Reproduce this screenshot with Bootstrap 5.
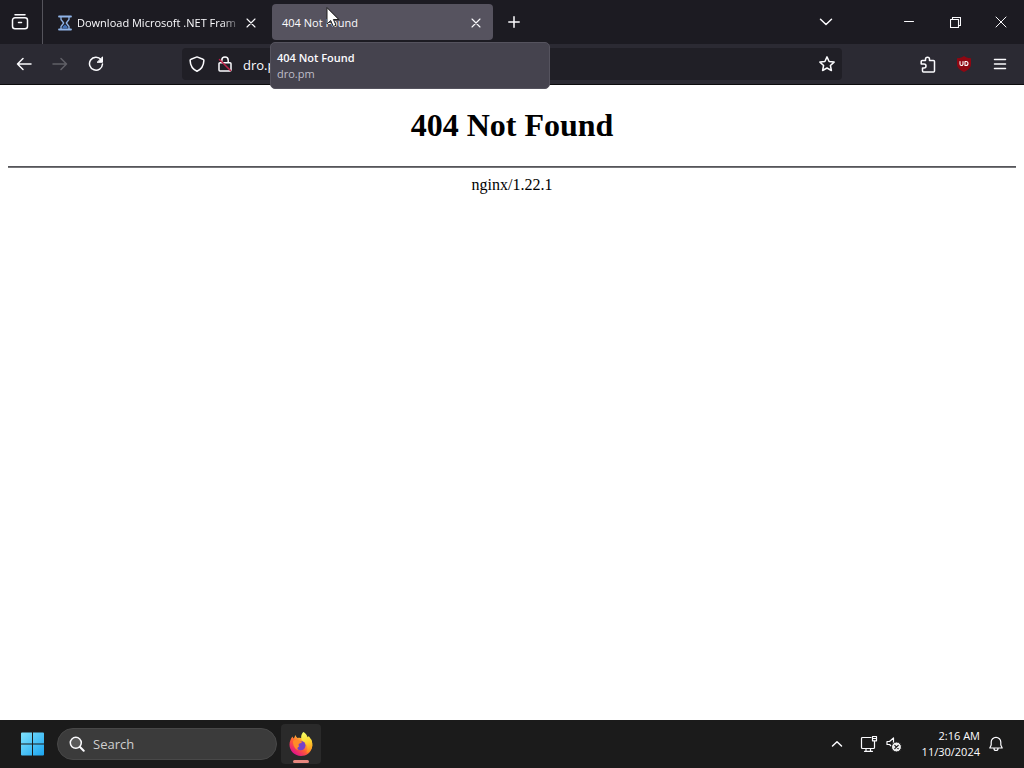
<!DOCTYPE html>
<html lang="en">
<head>
<meta charset="utf-8">
<meta name="viewport" content="width=device-width, initial-scale=1">
<title>404 Not Found</title>
<link href="https://cdn.jsdelivr.net/npm/bootstrap@5.3.0/dist/css/bootstrap.min.css" rel="stylesheet">
<style>
  body { font-family: "Open Sans", "Noto Sans", sans-serif; font-size: 11px; line-height: 16px; background: #fff; color: #fbfbfe; }
  svg { display: block; flex: none; fill: none; stroke: currentColor; stroke-width: 1.5; stroke-linecap: round; stroke-linejoin: round; }
  .plain { background: none; border: 0; padding: 0; color: inherit; display: flex; align-items: center; justify-content: center; flex: none; }
  .tabstrip { background: #1c1b22; height: 44px; }
  .view-cell { width: 43px; border-right: 1px solid #55545c; padding-right: 2px; }
  .browser-tab { width: 221px; height: 36px; border-radius: 4px; padding: 1px 8px 0 10px; }
  .browser-tab.current { background: #56535f; }
  .tab-label { background: none; border: 0; padding: 0; color: inherit; text-align: left; white-space: nowrap; }
  .fade-end { -webkit-mask-image: linear-gradient(to left, transparent, #000 20px); mask-image: linear-gradient(to left, transparent, #000 20px); }
  .tab-close { width: 18px; height: 20px; }
  .new-tab { width: 36px; height: 36px; margin-left: 3px; }
  .win-btns { padding-left: 42px; }
  .win-btn { width: 46px; height: 44px; }
  .tab-tip { position: absolute; top: 38px; left: -2px; width: 280px; z-index: 5; background: #45434e; border: 1px solid #55535e; border-radius: 5px; padding: 7px 6px 6px; }
  .tab-tip strong { font-weight: 600; }
  .tab-tip span { color: #bfbec8; }
  .pointer { position: absolute; left: 54px; top: 3px; z-index: 6; }
  .toolbar-row { background: #2b2a33; height: 41px; border-bottom: 1px solid #0c0c0d; padding: 0 6px; }
  .tool-btn { width: 36px; height: 36px; }
  .address { background: #201f26; height: 32px; border-radius: 4px; margin: 0 68px; padding: 0 7px; }
  .address input { background: none; border: 0; outline: 0; color: inherit; font-size: 13px; padding: 2px 0 0; margin-left: 6px; min-width: 0; }
  .web-page { color: #000; font-family: "Liberation Serif", serif; font-size: 16px; line-height: 18px; padding: 22px 8px; }
  .web-page h1 { font-size: 32px; line-height: 37px; font-weight: 700; margin: 0 0 22px; }
  .web-page hr { margin: 0 0 8px; border: 1px solid; border-color: #55555a #77777a #77777a #55555a; border-width: 1px 0; opacity: 1; }
  .taskbar { background: #1b1b1b; height: 48px; padding: 0 20px; }
  .search-box { background: #3b3b3b; border: 1px solid #484848; border-radius: 16px; height: 32px; width: 220px; padding: 0 11px; margin: 0 4px 0 12px; }
  .search-box input { background: none; border: 0; outline: 0; padding: 0; font-size: 13px; min-width: 0; color: #fff; }
  .search-box input::placeholder { color: #cfcfcf; opacity: 1; }
  .app-btn { width: 40px; height: 40px; background: #2a2a2a; border-radius: 4px; position: relative; }
  .app-btn::after { content: ""; position: absolute; bottom: 1px; left: 12px; width: 16px; height: 3px; border-radius: 2px; background: #e8877f; }
</style>
</head>
<body class="d-flex flex-column min-vh-100">

<header>
  <div class="tabstrip d-flex align-items-center">
    <div class="view-cell align-self-stretch d-flex align-items-center justify-content-center">
      <button class="plain" type="button" aria-label="Recent browsing">
        <svg width="18" height="18" viewBox="0 0 18 18"><path d="M4 1.800h10M4 4.800h10a2.500 2.500 0 0 1 2.500 2.500v6a2.500 2.500 0 0 1-2.500 2.500H4a2.500 2.500 0 0 1-2.500-2.500v-6A2.500 2.500 0 0 1 4 4.800zM7.500 9.500h3"/></svg>
      </button>
    </div>
    <nav class="d-flex align-items-center ms-1 gap-1" aria-label="Tabs">
      <div class="browser-tab d-flex align-items-center">
        <svg class="me-1" width="16" height="16" viewBox="0 0 16 16"><g stroke="#8fb4e8"><path stroke-width="1.800" d="M2 1.500h12M2 14.500h12"/><path stroke-width="1.300" d="M4 2v2.500L6.700 8 4 11.500V14M12 2v2.500L9.300 8 12 11.500V14"/></g><path fill="#3f6fb5" stroke="none" d="M5.500 13.500v-1.700L8 9.500l2.500 2.300v1.700z"/></svg>
        <button class="tab-label fade-end flex-fill" type="button">Download Microsoft .NET Fram</button>
        <button class="plain tab-close" type="button" aria-label="Close tab"><svg width="10" height="10" viewBox="0 0 10 10"><path stroke-width="1.100" d="M1 1l8 8M9 1L1 9"/></svg></button>
      </div>
      <div class="browser-tab current d-flex align-items-center position-relative">
        <button class="tab-label flex-fill" type="button" aria-describedby="tip">404 Not Found</button>
        <button class="plain tab-close" type="button" aria-label="Close tab"><svg width="10" height="10" viewBox="0 0 10 10"><path stroke-width="1.100" d="M1 1l8 8M9 1L1 9"/></svg></button>
        <div class="tab-tip d-flex flex-column" id="tip" role="tooltip"><strong>404 Not Found</strong><span>dro.pm</span></div>
        <svg class="pointer" width="14" height="22" viewBox="0 0 14 22"><path fill="#fff" stroke="#222" stroke-width="1" d="M1 1v16l3.700-3.500 2.600 6 2.700-1.200-2.600-5.800h5.100z"/></svg>
      </div>
    </nav>
    <button class="plain new-tab" type="button" aria-label="New tab"><svg width="12" height="12" viewBox="0 0 12 12"><path d="M6 .8v10.400M.8 6h10.400"/></svg></button>
    <button class="plain tool-btn ms-auto" type="button" aria-label="List all tabs"><svg width="14" height="8" viewBox="0 0 14 8"><path d="M1.500 1.300L7 6.500l5.500-5.200"/></svg></button>
    <div class="win-btns d-flex">
      <button class="plain win-btn" type="button" aria-label="Minimize"><svg width="10" height="10" viewBox="0 0 10 10"><path stroke-width="1" d="M.5 4.500h9"/></svg></button>
      <button class="plain win-btn" type="button" aria-label="Restore"><svg width="11" height="11" viewBox="0 0 11 11"><path stroke-width="1.100" d="M.5 2.500h8v8h-8zM2.500 2.500v-2h8v8h-2"/></svg></button>
      <button class="plain win-btn" type="button" aria-label="Close"><svg width="12" height="12" viewBox="0 0 12 12"><path stroke-width="1" d="M1 1l10 10M11 1L1 11"/></svg></button>
    </div>
  </div>

  <div class="toolbar-row d-flex align-items-center">
    <button class="plain tool-btn" type="button" aria-label="Back"><svg width="16" height="16" viewBox="0 0 16 16"><path d="M15 8H1.500M7 2.500L1.500 8 7 13.500"/></svg></button>
    <button class="plain tool-btn opacity-25" type="button" aria-label="Forward"><svg width="16" height="16" viewBox="0 0 16 16"><path d="M1 8h13.500M9 2.500L14.500 8 9 13.500"/></svg></button>
    <button class="plain tool-btn" type="button" aria-label="Reload"><svg width="16" height="16" viewBox="0 0 16 16"><path d="M13 3.500A6.500 6.500 0 1 0 14.500 8"/><path fill="currentColor" stroke-width="1" d="M14.500 1.300v5h-5z"/></svg></button>
    <div class="address d-flex align-items-center flex-fill">
      <svg width="16" height="16" viewBox="0 0 16 16"><path d="M8 .9l6 2.300c.6.200.9.700.9 1.200C14.700 9.500 12 13.500 8 15.200 4 13.500 1.300 9.500 1.100 4.400c0-.5.300-1 .9-1.200z"/></svg>
      <svg class="ms-2" width="24" height="16" viewBox="-4 0 24 16"><path d="M4.800 6.500V4.200a3.200 3.200 0 0 1 6.400 0v2.300M3 6.800h10a1 1 0 0 1 1 1V14a1 1 0 0 1-1 1H3a1 1 0 0 1-1-1V7.800a1 1 0 0 1 1-1z"/><path stroke="#c0234a" d="M2.500 3.500L13.500 14.500"/></svg>
      <input class="flex-fill" type="text" value="dro.pm" aria-label="Address">
      <button class="plain" type="button" aria-label="Bookmark this page"><svg width="16" height="16" viewBox="0 0 16 16"><path d="M8 .9l2.100 4.600 5 .6-3.700 3.400 1 5L8 12l-4.400 2.500 1-5L.9 6.100l5-.6z"/></svg></button>
    </div>
    <button class="plain tool-btn" type="button" aria-label="Extensions"><svg width="16" height="17" viewBox="0 0 16 17"><path d="M5.500 4.500V3.200a2 2 0 0 1 4 0v1.300h4a1 1 0 0 1 1 1V15a1 1 0 0 1-1 1h-10a1 1 0 0 1-1-1v-3h1.500a2 2 0 0 0 0-4H1.200V5.500a1 1 0 0 1 1-1z"/></svg></button>
    <button class="plain tool-btn" type="button" aria-label="uBlock Origin"><svg width="16" height="16" viewBox="0 0 16 16"><path fill="#8f0712" stroke="none" d="M8 0l2 1.200c1.600.7 3.300 1 5 1V8c0 4-3 6-7 8-4-2-7-4-7-8V2.200c1.700 0 3.400-.3 5-1z"/><path stroke="#fff" stroke-width="1.100" d="M4 5.500V8a1.500 1.500 0 0 0 3 0V5.500M9 5.500v4h1a2 2 0 0 0 0-4z"/></svg></button>
    <button class="plain tool-btn" type="button" aria-label="Open menu"><svg width="14" height="12" viewBox="0 0 14 12"><path d="M1.500 1.500h11M1.500 6h11M1.500 10.500h11"/></svg></button>
  </div>
</header>

<main class="web-page flex-fill text-center">
  <h1>404 Not Found</h1>
  <hr>
  <div>nginx/1.22.1</div>
</main>

<footer class="taskbar d-flex align-items-center">
  <button class="plain" type="button" aria-label="Start">
    <svg width="25" height="24" viewBox="0 0 25 24"><defs><linearGradient id="win" x1="0" y1="0" x2="24" y2="24" gradientUnits="userSpaceOnUse"><stop stop-color="#83e4fd"/><stop offset="1" stop-color="#1aa4f0"/></linearGradient></defs><path fill="url(#win)" stroke="none" d="M1 1.500a1 1 0 0 1 1-1h10v11H1zM13 .5h10a1 1 0 0 1 1 1v10H13zM1 12.500h11v11H2a1 1 0 0 1-1-1zM13 12.500h11v10a1 1 0 0 1-1 1H13z"/></svg>
  </button>
  <label class="search-box d-flex align-items-center gap-2">
    <svg width="16" height="16" viewBox="0 0 16 16"><circle cx="6.800" cy="6.800" r="5.500" fill="#5a5a5a"/><path stroke-width="2" d="M11 11l3.700 3.700"/></svg>
    <input class="flex-fill" type="search" placeholder="Search" aria-label="Search">
  </label>
  <button class="plain app-btn" type="button" aria-label="Firefox">
    <svg width="24" height="24" viewBox="0 0 24 24"><defs><linearGradient id="fx" x1="20" y1="3" x2="5" y2="21" gradientUnits="userSpaceOnUse"><stop stop-color="#fff44f"/><stop offset=".35" stop-color="#ffb02e"/><stop offset=".65" stop-color="#ff5a36"/><stop offset="1" stop-color="#e31587"/></linearGradient><linearGradient id="fl" x1="15" y1="0" x2="20" y2="20" gradientUnits="userSpaceOnUse"><stop stop-color="#f2ff66"/><stop offset=".5" stop-color="#ffd52e"/><stop offset="1" stop-color="#ff8a1e"/></linearGradient></defs><g stroke="none"><path fill="url(#fx)" d="M3.500 4.500c.3 1 .8 1.600 1.300 2.100L6.500 3c.3 1.300 1 2.300 2 3 2-.4 3-.3 4.500.3L22 7c1.500 3 1.600 6 1 8.500C21.800 20.500 17.500 24 12 24 5.800 24 .5 19 .5 12.800c0-3 1.100-6 3-8.300z"/><path fill="url(#fl)" d="M14.500 0c2 1.200 3.500 3.300 4.200 5.200.5-.3.800-.8.900-1.200 2.300 2.300 3.900 6 3.700 9.500-.3 3.800-2.800 6.500-6 7.500 1.700-3 1.700-7-.9-9.500-2.500-2.300-4.600-3.500-4.200-7 .2-2 1-3.500 2.300-4.500z"/><circle cx="11.800" cy="13.600" r="4.700" fill="#7542c8"/><path fill="#ff8b28" d="M4 9c2-1.700 4.500-1.300 6.200-.3 1 .6 2.300.5 3 .8-.3 1.400-2.500 1.800-3.200 2.300-.8.800-.4 2 .3 2.600-1.700.5-2.700 2-1 3.600C5.800 17.500 3.800 13 4 9z"/></g></svg>
  </button>

  <div class="ms-auto d-flex align-items-center">
    <button class="plain me-3" type="button" aria-label="Show hidden icons"><svg width="14" height="8" viewBox="0 0 14 8"><path d="M2.500 6L7 1.700 11.500 6"/></svg></button>
    <button class="plain" type="button" aria-label="Network"><svg width="18" height="18" viewBox="0 0 18 18"><path stroke-width="1.200" d="M11 2.500H2.500a1 1 0 0 0-1 1v9a1 1 0 0 0 1 1h11a1 1 0 0 0 1-1V8M6 13.500V16M10.500 13.500V16M4.500 16.300h8M12.500 1.500h4v4.300h-4zM12.500 3.500h4M14.500 6v2.500"/></svg></button>
    <button class="plain ms-2" type="button" aria-label="Volume muted"><svg width="16" height="16" viewBox="0 0 16 16"><path stroke-width="1.200" d="M1 5.500h2.500L7.500 2v10l-4-3.500H1z"/><circle cx="10.500" cy="11" r="5" fill="#eee" stroke="#1b1b1b" stroke-width="1"/><path stroke="#1b1b1b" stroke-width="1.200" d="M8.800 9.300l3.400 3.400M12.200 9.300l-3.400 3.400"/></svg></button>
    <div class="text-end ps-1 ms-3"><div>2:16 AM</div><div>11/30/2024</div></div>
    <button class="plain ms-2" type="button" aria-label="Notifications"><svg width="16" height="16" viewBox="0 0 16 16"><path stroke-width="1.200" d="M8 1.300a4.800 4.800 0 0 0-4.800 4.800v3L1.800 12h12.400l-1.400-2.900v-3A4.800 4.800 0 0 0 8 1.300zM6 12.500a2 2 0 0 0 4 0"/></svg></button>
  </div>
</footer>

<script src="https://cdn.jsdelivr.net/npm/bootstrap@5.3.0/dist/js/bootstrap.bundle.min.js"></script>
</body>
</html>
